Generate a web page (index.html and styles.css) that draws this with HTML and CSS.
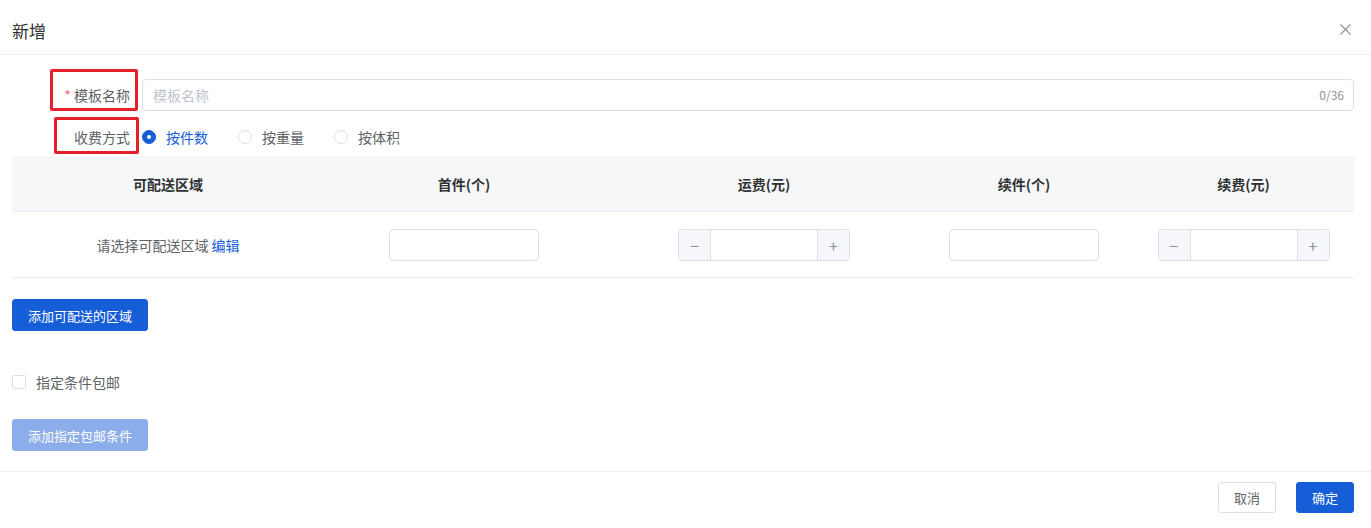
FILE: index.html
```html
<!DOCTYPE html>
<html lang="zh">
<head>
<meta charset="utf-8">
<title>新增</title>
<link rel="stylesheet" href="styles.css">
</head>
<body>
<div class="dialog">
  <div class="dlg-header">
    <span class="dlg-title">新增</span>
    <span class="dlg-close" aria-label="关闭">
      <svg width="11" height="11" viewBox="0 0 11 11"><path d="M0.5 0.5 L10.5 10.5 M10.5 0.5 L0.5 10.5" stroke="#909399" stroke-width="1.2" fill="none"/></svg>
    </span>
  </div>
  <div class="dlg-body">
    <div class="form-row row-name">
      <div class="form-label"><span class="label-text mark mark-1"><i class="req">*</i> 模板名称</span></div>
      <div class="input-wrap">
        <input class="text-input" type="text" placeholder="模板名称">
        <span class="counter">0/36</span>
      </div>
    </div>
    <div class="form-row row-fee">
      <div class="form-label"><span class="label-text mark mark-2">收费方式</span></div>
      <div class="radios">
        <label class="radio checked"><span class="radio-dot"></span><span class="radio-text">按件数</span></label>
        <label class="radio"><span class="radio-dot"></span><span class="radio-text">按重量</span></label>
        <label class="radio"><span class="radio-dot"></span><span class="radio-text">按体积</span></label>
      </div>
    </div>

    <div class="table">
      <div class="t-row t-head">
        <div class="cell">可配送区域</div>
        <div class="cell">首件(个)</div>
        <div class="cell">运费(元)</div>
        <div class="cell">续件(个)</div>
        <div class="cell cell-last">续费(元)</div>
      </div>
      <div class="t-row t-body">
        <div class="cell area">请选择可配送区域 <a class="link">编辑</a></div>
        <div class="cell"><input class="box-input" type="text"></div>
        <div class="cell">
          <div class="num-input"><span class="num-btn minus">−</span><input type="text"><span class="num-btn plus">+</span></div>
        </div>
        <div class="cell"><input class="box-input" type="text"></div>
        <div class="cell cell-last">
          <div class="num-input"><span class="num-btn minus">−</span><input type="text"><span class="num-btn plus">+</span></div>
        </div>
      </div>
    </div>

    <button class="btn btn-primary btn-add">添加可配送的区域</button>

    <label class="checkbox"><span class="check-box"></span><span class="check-text">指定条件包邮</span></label>

    <button class="btn btn-primary btn-disabled">添加指定包邮条件</button>
  </div>
  <div class="dlg-footer">
    <button class="btn btn-default">取消</button>
    <button class="btn btn-primary">确定</button>
  </div>
</div>
</body>
</html>
```

FILE: styles.css
```css
* { box-sizing: border-box; }
html, body { margin: 0; padding: 0; background: #fff; }
body {
  font-family: "Noto Sans CJK SC", "Liberation Sans", sans-serif;
  font-size: 14px;
  color: #606266;
}
.dialog { width: 1371px; height: 528px; background: #fff; }

.dlg-header {
  height: 55px;
  padding: 19px 17px 0 12px;
  border-bottom: 1px solid #ebeef5;
  display: flex;
  justify-content: space-between;
  align-items: flex-start;
}
.dlg-title { font-size: 17px; line-height: 24px; color: #303133; }
.dlg-close { display: flex; margin-top: 5px; margin-right: 3px; }

.dlg-body { padding: 24px 17px 0 12px; }

.form-row { display: flex; align-items: center; }
.row-name { height: 32px; margin-bottom: 9px; }
.row-fee { height: 34px; margin-bottom: 2px; }
.form-label {
  width: 130px;
  flex: none;
  text-align: right;
  padding-right: 12px;
  display: flex;
  justify-content: flex-end;
}
.label-text { position: relative; color: #606266; line-height: 20px; white-space: nowrap; }
.req { font-style: normal; color: #f56c6c; margin-right: 0; }
.mark::after {
  content: "";
  position: absolute;
  border: 3px solid #e6202a;
  border-radius: 2px;
}
.mark-1::after { left: -14px; right: -8px; top: -16px; bottom: -6px; }
.mark-2::after { left: -20px; right: -9px; top: -10px; bottom: -7px; }

.input-wrap { position: relative; flex: 1; }
.text-input {
  width: 100%;
  height: 32px;
  border: 1px solid #dcdfe6;
  border-radius: 4px;
  padding: 0 50px 0 10px;
  font: inherit;
  color: #606266;
  outline: none;
}
.text-input::placeholder { color: #c0c4cc; }
.counter {
  position: absolute;
  right: 10px;
  top: 0;
  line-height: 32px;
  font-size: 12px;
  color: #909399;
}

.radios { display: flex; align-items: center; }
.radio { display: flex; align-items: center; margin-right: 30px; cursor: pointer; }
.radio-dot {
  width: 14px; height: 14px;
  border: 1px solid #dcdfe6;
  border-radius: 50%;
  background: #fff;
  margin-right: 10px;
  position: relative;
}
.radio.checked .radio-dot { background: #165dd8; border-color: #165dd8; }
.radio.checked .radio-dot::after {
  content: "";
  position: absolute;
  width: 4px; height: 4px;
  background: #fff;
  border-radius: 50%;
  left: 4px; top: 4px;
}
.radio-text { color: #606266; }
.radio.checked .radio-text { color: #165dd8; }

.table { width: 1342px; }
.t-row {
  display: grid;
  grid-template-columns: 312px 280px 320px 200px 230px;
  border-bottom: 1px solid #ebeef5;
}
.t-head { height: 56px; background: #f6f7f9; font-weight: bold; color: #303133; }
.t-body { height: 66px; }
.cell { display: flex; align-items: center; justify-content: center; }
.cell-last { padding-left: 9px; }
.area { color: #606266; white-space: pre; }
.link { color: #165dd8; cursor: pointer; }

.box-input {
  width: 150px; height: 32px;
  border: 1px solid #dcdfe6;
  border-radius: 4px;
  outline: none;
  font: inherit;
}
.num-input {
  width: 172px; height: 32px;
  border: 1px solid #dcdfe6;
  border-radius: 4px;
  display: flex;
  overflow: hidden;
}
.num-input input {
  flex: 1; min-width: 0;
  border: none; outline: none;
  font: inherit;
}
.num-btn {
  width: 32px; flex: none;
  background: #f5f7fa;
  color: #8c9097;
  display: flex; align-items: center; justify-content: center;
  font-size: 16px;
}
.minus { border-right: 1px solid #dcdfe6; }
.plus { border-left: 1px solid #dcdfe6; }

.btn {
  height: 32px;
  padding: 0 15px;
  font-family: inherit;
  font-size: 13px;
  border-radius: 3px;
  border: 1px solid transparent;
  cursor: pointer;
}
.btn-primary { background: #165dd8; border-color: #165dd8; color: #fff; }
.btn-default { background: #fff; border-color: #dcdfe6; color: #606266; }
.btn-add { display: block; width: 136px; margin-top: 21px; padding: 0; }
.btn-disabled { display: block; width: 136px; padding: 0; background: #8badea; border-color: #8badea; margin-top: 27px; }

.checkbox { display: flex; align-items: center; height: 20px; margin-top: 41px; }
.check-box {
  width: 14px; height: 14px;
  border: 1px solid #dcdfe6;
  border-radius: 2px;
  margin-right: 10px;
}
.check-text { color: #606266; }

.dlg-footer {
  margin-top: 20px;
  border-top: 1px solid #ebeef5;
  padding: 10px 17px 0 0;
  display: flex;
  justify-content: flex-end;
  gap: 20px;
}
.dlg-footer .btn { width: 58px; height: 31px; padding: 0; }
```
